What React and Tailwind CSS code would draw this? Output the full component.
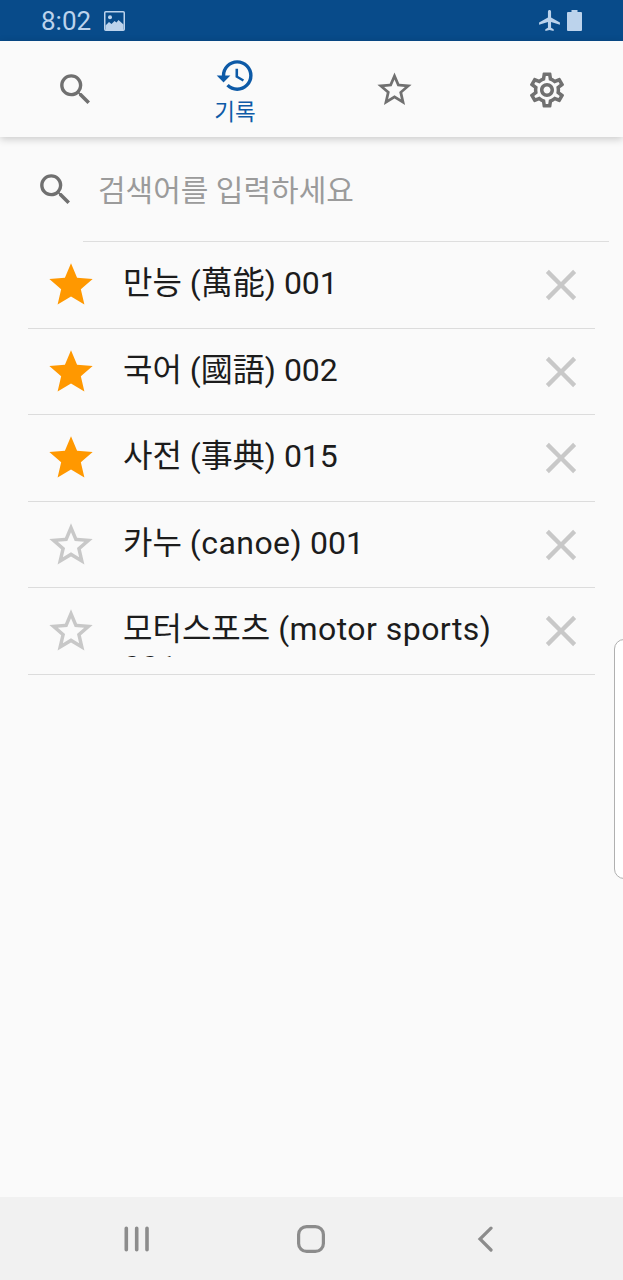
import { useState } from 'react';
import {
  MdAirplanemodeActive,
  MdClose,
  MdHistory,
  MdOutlineSettings,
  MdSearch,
  MdStar,
  MdStarBorder,
} from 'react-icons/md';

const TABS = [
  { id: 'search', label: '검색', icon: MdSearch, size: 'size-[41px]' },
  { id: 'history', label: '기록', icon: MdHistory, size: 'size-[41px]' },
  { id: 'favorites', label: '즐겨찾기', icon: MdStarBorder, size: 'size-[41px]' },
  { id: 'settings', label: '설정', icon: MdOutlineSettings, size: 'size-[42px]' },
];

const HISTORY = [
  { id: 1, word: '만능', origin: '(萬能)', no: '001', starred: true },
  { id: 2, word: '국어', origin: '(國語)', no: '002', starred: true },
  { id: 3, word: '사전', origin: '(事典)', no: '015', starred: true },
  { id: 4, word: '카누', origin: '(canoe)', no: '001', latin: true, starred: false },
  { id: 5, word: '모터스포츠', origin: '(motor sports)', no: '001', latin: true, starred: false },
];

function StatusBar() {
  return (
    <div className="flex h-[41px] shrink-0 items-center bg-[#084b8a] pl-[41px] pr-[41px] text-[#bcd3ec]">
      <span className="pt-0.5 text-[26px] leading-[39px]">8:02</span>
      <svg viewBox="0 0 21 20" className="ml-[13px] h-5 w-[21px]" fill="none">
        <rect x="0.75" y="0.75" width="19.5" height="18.5" rx="1" stroke="currentColor" strokeWidth="1.5" />
        <path d="M1.500 14.500l3.500-3.500 2.500 2L10.500 10l2 1.500 2-2.500 5 4.500V19h-18z" fill="currentColor" />
        <circle cx="6" cy="6.300" r="2" fill="currentColor" />
      </svg>
      <MdAirplanemodeActive className="ml-auto size-[25px]" />
      <svg viewBox="0 0 15 21" className="ml-[5px] h-[21px] w-[15px]" fill="currentColor">
        <path d="M4.500 0h6v2H14a1 1 0 0 1 1 1v17a1 1 0 0 1-1 1H1a1 1 0 0 1-1-1V3a1 1 0 0 1 1-1h3.500z" />
      </svg>
    </div>
  );
}

function TabBar({ active, onChange }) {
  return (
    <nav className="relative grid h-24 shrink-0 grid-cols-[151px_168px_151px_153px] bg-[#fafafa] shadow-[0_2px_8px_rgba(0,0,0,0.2)]">
      {TABS.map(({ id, label, icon: Icon, size }) => (
        <button
          key={id}
          aria-label={label}
          onClick={() => onChange(id)}
          className={`flex flex-col items-center justify-center ${
            id === active ? 'pt-1.5 text-[#0d5aa7]' : 'pt-px text-[#707070]'
          }`}
        >
          <Icon className={size} />
          {id === active && <span className="text-[22.5px] leading-[33px]">{label}</span>}
        </button>
      ))}
    </nav>
  );
}

function SearchField() {
  return (
    <div className="flex h-[104.5px] shrink-0 pl-[35px] pr-3.5">
      <MdSearch className="mt-8 size-[41px] text-[#707070]" />
      <div className="ml-[7px] flex flex-1 border-b-[1.5px] border-[#dedede]">
        <input
          placeholder="검색어를 입력하세요"
          className="mt-8 h-[42px] w-full bg-transparent pl-[15px] text-[30px] text-[#222] outline-none placeholder:text-[#9b9b9b]"
        />
      </div>
    </div>
  );
}

function HistoryRow({ item, onToggle, onRemove }) {
  return (
    <li className="flex h-[86.5px] border-b border-[#dcdcdc] pl-[17px] pr-[8px]">
      <button onClick={onToggle} className="mt-[17px] size-[52px]">
        {item.starred ? (
          <MdStar className="size-[52px] text-[#ff9800]" />
        ) : (
          <MdStarBorder className="size-[52px] text-[#c8c8c8]" />
        )}
      </button>
      {/* only one line and the very top of the next fit in here */}
      <div className="ml-[26px] mt-[22px] h-[47px] w-[400px] overflow-hidden text-[32px] leading-[38px] text-[#1c1c1c]">
        {item.word} <span className={item.latin ? 'tracking-[0.45px]' : ''}>{item.origin}</span> {item.no}
      </div>
      <button onClick={onRemove} className="ml-auto mt-[17px] size-[52px]">
        <MdClose className="size-[52px] text-[#c8c8c8]" />
      </button>
    </li>
  );
}

function NavigationBar() {
  return (
    <div className="flex h-[83px] shrink-0 items-center bg-[#f1f1f1] pl-[124px] text-[#8c8c8c]">
      <svg viewBox="0 0 26 28" className="h-7 w-[26px]" stroke="currentColor" strokeWidth="3.600" strokeLinecap="round">
        <path d="M2.300 3.300v21.500M12.700 3.300v21.500M23 3.300v21.500" />
      </svg>
      <svg viewBox="0 0 28 28" className="ml-[147px] size-7" fill="none" stroke="currentColor" strokeWidth="3.200">
        <rect x="1.600" y="1.600" width="24.800" height="24.800" rx="8" />
      </svg>
      <svg viewBox="0 0 16 28" className="ml-[152px] h-7 w-4" fill="none" stroke="currentColor" strokeWidth="3.200" strokeLinecap="round">
        <path d="M14 3.200L3 14l11 11" />
      </svg>
    </div>
  );
}

export default function App() {
  const [tab, setTab] = useState('history');
  const [items, setItems] = useState(HISTORY);

  const toggle = (id) =>
    setItems(items.map((it) => (it.id === id ? { ...it, starred: !it.starred } : it)));
  const remove = (id) => setItems(items.filter((it) => it.id !== id));

  return (
    <div
      lang="ko"
      className="relative flex h-[1280px] w-[623px] flex-col overflow-hidden bg-[#fafafa] font-[Roboto,'Noto_Sans_CJK_KR',sans-serif]"
    >
      <StatusBar />
      <TabBar active={tab} onChange={setTab} />
      <SearchField />
      <ul className="mx-7 flex-1 pt-[0.5px]">
        {items.map((item) => (
          <HistoryRow
            key={item.id}
            item={item}
            onToggle={() => toggle(item.id)}
            onRemove={() => remove(item.id)}
          />
        ))}
      </ul>
      <NavigationBar />

      {/* edge panel handle */}
      <div className="absolute -right-1 top-[639px] h-[240px] w-[13px] rounded-l-[10px] border border-[#b0b0b0] bg-white" />
    </div>
  );
}
